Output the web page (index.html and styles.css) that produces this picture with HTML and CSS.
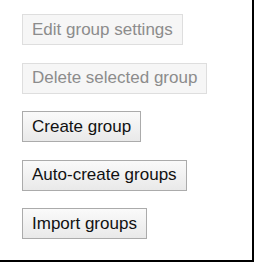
FILE: index.html
```html
<!DOCTYPE html>
<html>
<head>
<link rel="stylesheet" href="styles.css">
</head>
<body>
  <div class="panel">
    <div class="button-list">
      <button class="btn" disabled>Edit group settings</button>
      <button class="btn" disabled>Delete selected group</button>
      <button class="btn">Create group</button>
      <button class="btn">Auto-create groups</button>
      <button class="btn">Import groups</button>
    </div>
  </div>
</body>
</html>
```

FILE: styles.css
```css
* {
  box-sizing: border-box;
  margin: 0;
  padding: 0;
}
body {
  width: 254px;
  height: 262px;
  background-color: #fff;
  font-family: "Liberation Sans", Arial, sans-serif;
}
.panel {
  width: 254px;
  height: 262px;
  border-right: 2px solid #000;
  border-bottom: 2px solid #000;
  padding: 14px 0 0 22px;
}
.button-list {
  display: flex;
  flex-direction: column;
  align-items: flex-start;
  gap: 17.5px;
}
.btn {
  height: 31px;
  padding: 0 9px;
  font-family: inherit;
  font-size: 17px;
  color: #111;
  background: linear-gradient(to bottom, #fafafa, #e9e9e9);
  border: 1px solid #ababab;
  border-radius: 0;
}
.btn:disabled {
  color: #8c8c8c;
  background: #f6f6f6;
  border-color: #dedede;
}
```
